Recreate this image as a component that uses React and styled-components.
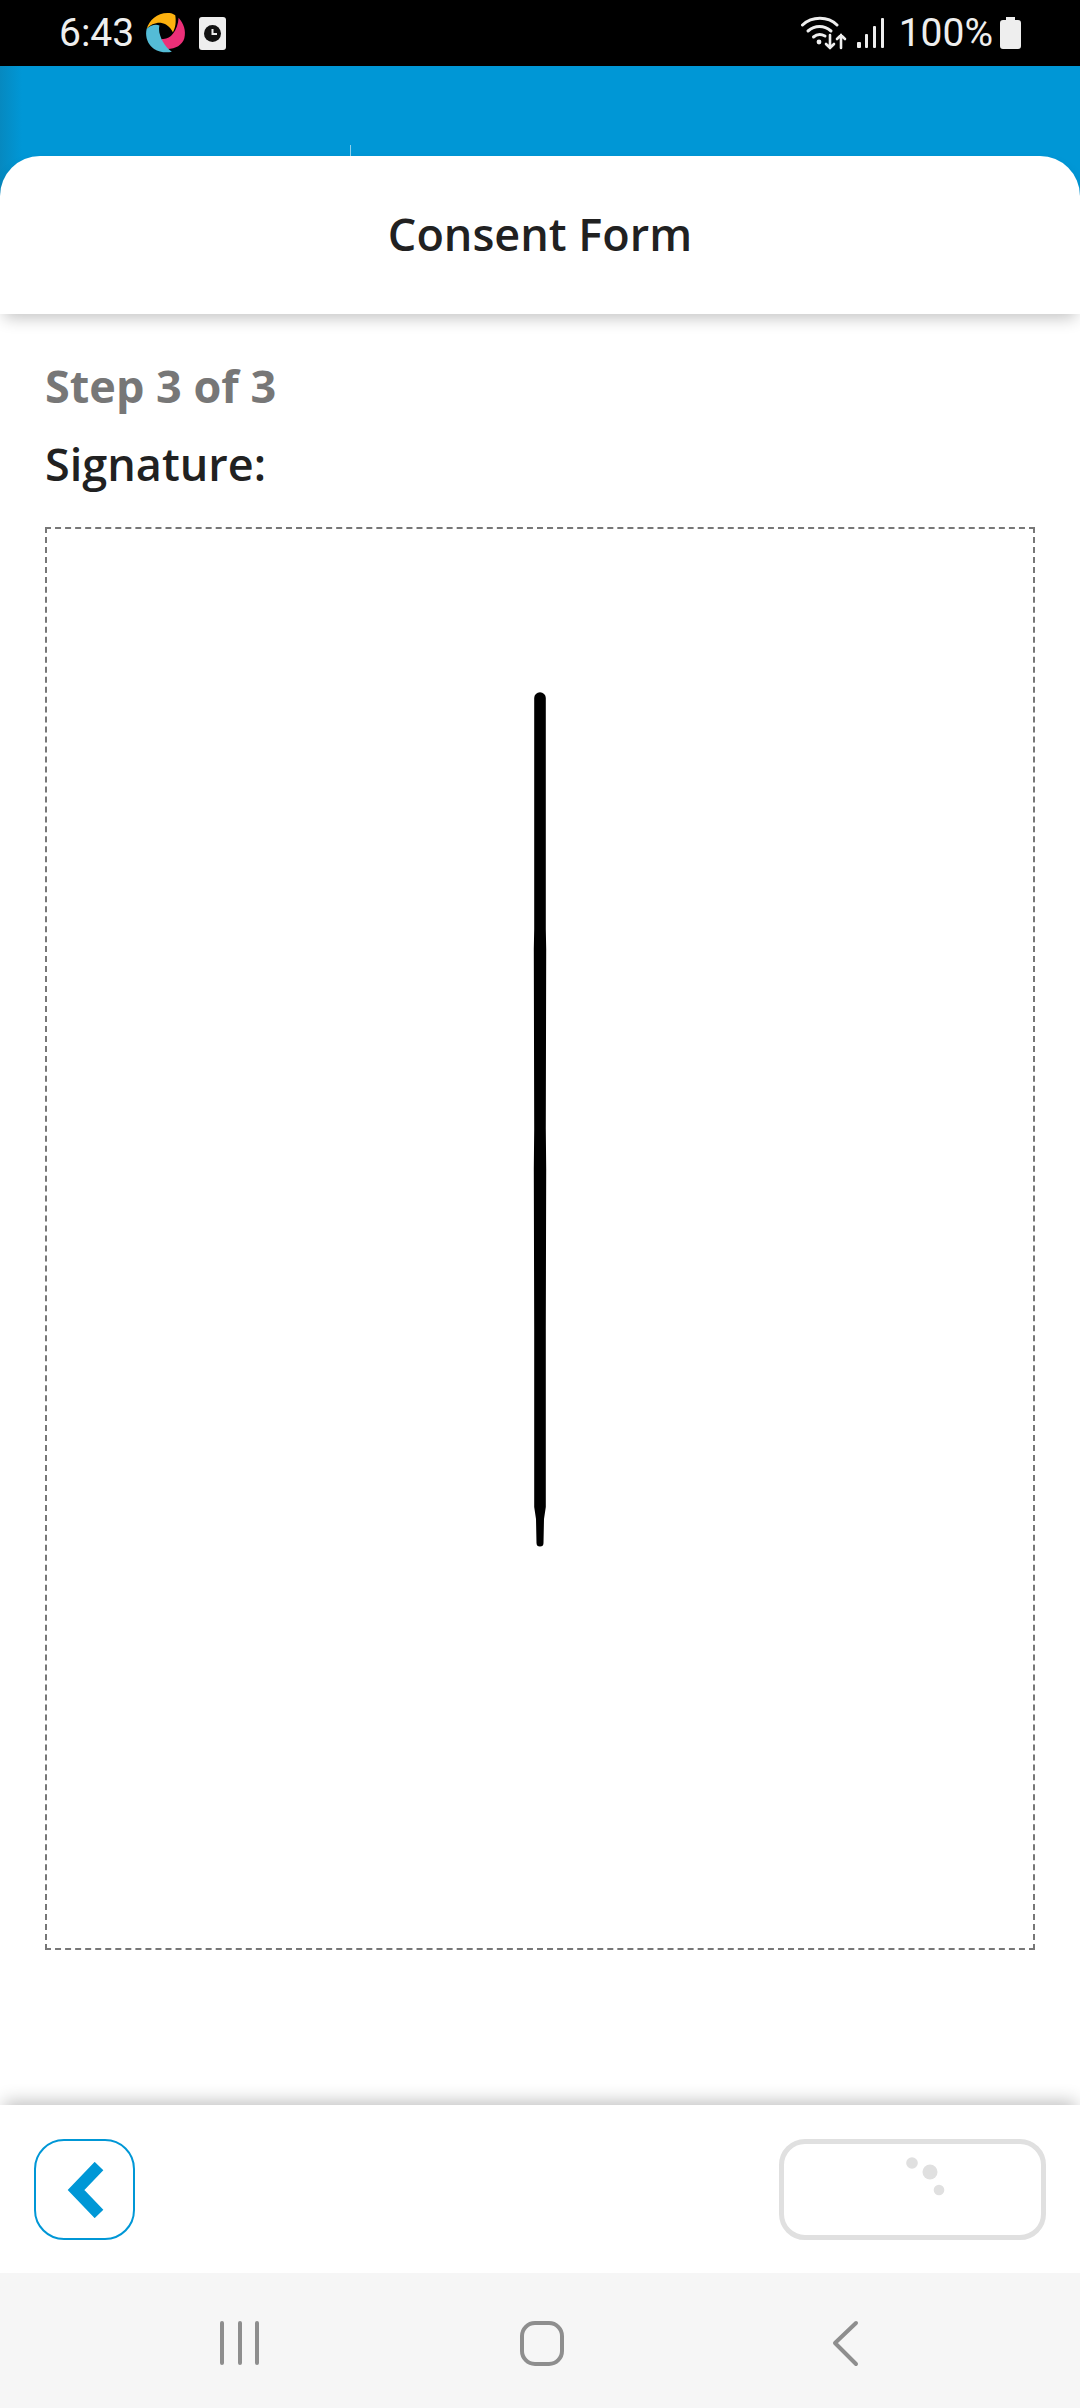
import React from "react";
import styled, { createGlobalStyle } from "styled-components";

const Global = createGlobalStyle`
  html, body { margin: 0; padding: 0; background: #fff; }
  * { box-sizing: border-box; }
`;

const Page = styled.div`
  width: 1080px;
  height: 2408px;
  display: flex;
  flex-direction: column;
  overflow: hidden;
  background: #fff;
  font-family: "Open Sans", "Noto Sans", sans-serif;
`;

const StatusBar = styled.div`
  height: 66px;
  flex: none;
  background: #000;
  color: #eeeeee;
  display: flex;
  align-items: center;
  padding: 0 59px 0 59px;
  font-family: Roboto, sans-serif;
  font-size: 39px;
  line-height: 66px;
`;

const StatusLeft = styled.div`
  display: flex;
  align-items: center;
  gap: 12px;
`;

const StatusRight = styled.div`
  margin-left: auto;
  display: flex;
  align-items: center;
`;

const StatusTime = styled.span`
  width: 74px;
`;

const Percent = styled.span`
  margin: 0 7px 0 14px;
`;

const NotificationBox = styled.div`
  width: 27px;
  height: 33px;
  background: #eeeeee;
  border-radius: 3px;
  display: flex;
  align-items: center;
  justify-content: center;
`;

const BlueBand = styled.div`
  position: relative;
  flex: none;
  height: 90px;
  background: linear-gradient(90deg, #0689c0 0, #0097d6 22px);
`;

const Tick = styled.div`
  position: absolute;
  left: 350px;
  bottom: 0;
  width: 1px;
  height: 11px;
  background: #8fd0ec;
`;

const HeaderWrap = styled.div`
  flex: none;
  position: relative;
  z-index: 2;
  background: linear-gradient(90deg, #0689c0 0, #0097d6 22px);
`;

const HeaderCard = styled.header`
  height: 158px;
  background: #fff;
  border-radius: 40px 40px 0 0;
  display: flex;
  align-items: center;
  justify-content: center;
  box-shadow: 0 8px 16px -4px rgba(0, 0, 0, 0.24);
`;

const Title = styled.h1`
  margin: 0 0 2px;
  font-size: 45px;
  font-weight: 600;
  line-height: 60px;
  color: #212121;
`;

const Content = styled.main`
  flex: 1;
  display: flex;
  flex-direction: column;
  padding: 45px 45px 0;
`;

const Step = styled.div`
  font-size: 45px;
  font-weight: 700;
  line-height: 54px;
  color: #777777;
`;

const Label = styled.div`
  margin-top: 24px;
  font-size: 45px;
  font-weight: 600;
  line-height: 54px;
  color: #212121;
`;

const SignaturePad = styled.div`
  margin-top: 36px;
  width: 990px;
  height: 1423px;
  border: 2px dashed #777777;
`;

const SignatureDrawing = styled.svg`
  display: block;
  width: 100%;
  height: 100%;
`;

const Footer = styled.footer`
  position: relative;
  z-index: 2;
  flex: none;
  height: 168px;
  background: #fff;
  padding: 34px 34px 0;
  display: flex;
  justify-content: space-between;
  align-items: flex-start;
  box-shadow: 0 -8px 16px -4px rgba(0, 0, 0, 0.24);
`;

const BackButton = styled.button`
  width: 101px;
  height: 101px;
  padding: 0;
  background: #fff;
  border: 2px solid #0097d6;
  border-radius: 30px;
  display: flex;
  align-items: center;
  justify-content: center;
`;

const NextButton = styled.button`
  width: 267px;
  height: 101px;
  padding: 0;
  background: #fff;
  border: 5px solid #e0e0e0;
  border-radius: 26px;
  display: flex;
  align-items: center;
  justify-content: center;
`;

const NavBar = styled.nav`
  position: relative;
  z-index: 3;
  flex: none;
  height: 135px;
  background: #f6f6f6;
`;

const NavIcons = styled.svg`
  display: block;
  width: 1080px;
  height: 135px;
`;

const Logo = () => (
  <svg width="42" height="42" viewBox="45 40 125 125">
    <path d="M50 90 C58 62 84 40 118 43 C124 44 130 46 135 50 C138 68 136 88 128 100 C120 84 106 74 92 72 C76 71 60 78 50 90Z" fill="#fdb10f" />
    <path d="M145 57 C160 74 168 96 162 118 C156 138 136 150 112 150 L100 150 C96 140 94 130 95 120 C108 122 120 116 128 105 C138 92 144 76 145 57Z" fill="#ec2f78" />
    <path d="M50 90 C62 78 78 76 88 80 C84 96 90 112 98 128 C106 142 114 152 125 158 C108 162 88 160 72 150 C54 138 44 114 50 90Z" fill="#54bcd6" />
  </svg>
);

const Wifi = () => (
  <svg width="46" height="34" viewBox="0 0 46 34" fill="none" stroke="#eee" strokeLinecap="round">
    <path d="M1.5 9 C11 0 27 0 36 9" strokeWidth="3" />
    <path d="M7 15 C14 9 23 9 30 15" strokeWidth="3" />
    <path d="M12.5 21 C16 18 20 18 24 20" strokeWidth="3" />
    <circle cx="18" cy="26" r="2.4" fill="#eee" stroke="none" />
    <path d="M29 19 V32 M25 28 L29 32 L33 28" strokeWidth="2.6" />
    <path d="M40 32 V19 M36 23 L40 19 L44 23" strokeWidth="2.6" />
  </svg>
);

const Signal = () => (
  <svg width="28" height="30" viewBox="0 0 28 30" fill="#eee" style={{ marginLeft: 10 }}>
    <rect x="0" y="24" width="4" height="6" rx="1" />
    <rect x="8" y="16" width="3" height="14" rx="1" />
    <rect x="16" y="8" width="3" height="22" rx="1" />
    <rect x="24" y="0" width="3" height="30" rx="1" />
  </svg>
);

const Battery = () => (
  <svg width="21" height="32" viewBox="0 0 21 32" fill="#eee">
    <path d="M6 0 H15 V3 H18 C20 3 21 4 21 6 V29 C21 31 20 32 18 32 H3 C1 32 0 31 0 29 V6 C0 4 1 3 3 3 H6Z" />
  </svg>
);

const Clock = () => (
  <svg width="17" height="17" viewBox="0 0 17 17">
    <circle cx="8.5" cy="8.5" r="8.5" fill="#111" />
    <path d="M8.5 4 V9 H13" fill="none" stroke="#eee" strokeWidth="2" />
  </svg>
);

export default function App() {
  return (
    <Page>
      <Global />
      <StatusBar>
        <StatusLeft>
          <StatusTime>6:43</StatusTime>
          <Logo />
          <NotificationBox>
            <Clock />
          </NotificationBox>
        </StatusLeft>
        <StatusRight>
          <Wifi />
          <Signal />
          <Percent>100%</Percent>
          <Battery />
        </StatusRight>
      </StatusBar>
      <BlueBand>
        <Tick />
      </BlueBand>
      <HeaderWrap>
        <HeaderCard>
          <Title>Consent Form</Title>
        </HeaderCard>
      </HeaderWrap>
      <Content>
        <Step>Step 3 of 3</Step>
        <Label>Signature:</Label>
        <SignaturePad>
          <SignatureDrawing viewBox="0 0 986 1419">
            <path
              d="M487.2 169 A5.8 5.8 0 0 1 498.8 169 V400 L499.2 420 L498.8 600 L499.2 640 L498.8 800 V978 L497 990 L496.5 1014 A3.5 3.5 0 0 1 489.5 1014 L489 990 L487.2 978 V800 L486.8 640 L487.2 600 L486.8 420 L487.2 400 Z"
              fill="#000"
            />
          </SignatureDrawing>
        </SignaturePad>
      </Content>
      <Footer>
        <BackButton aria-label="Back">
          <svg width="40" height="56" viewBox="0 0 40 56" fill="none">
            <path d="M34 4 L11 28 L34 52" stroke="#0097d6" strokeWidth="12" strokeLinejoin="miter" />
          </svg>
        </BackButton>
        <NextButton aria-label="Next">
          <svg width="257" height="91" viewBox="0 0 257 91" fill="#e0e0e0">
            <circle cx="128" cy="19" r="5.8" />
            <circle cx="146" cy="28" r="7.5" />
            <circle cx="155" cy="46" r="5.3" />
          </svg>
        </NextButton>
      </Footer>
      <NavBar>
        <NavIcons viewBox="0 0 1080 135" fill="none" stroke="#8e8e8e" strokeWidth="4" strokeLinecap="round" strokeLinejoin="round">
          <path d="M222 50 V90 M240 50 V90 M257 50 V90" />
          <rect x="522" y="50" width="40" height="41" rx="13" />
          <path d="M856 50 L835 70 L856 91" />
        </NavIcons>
      </NavBar>
    </Page>
  );
}
